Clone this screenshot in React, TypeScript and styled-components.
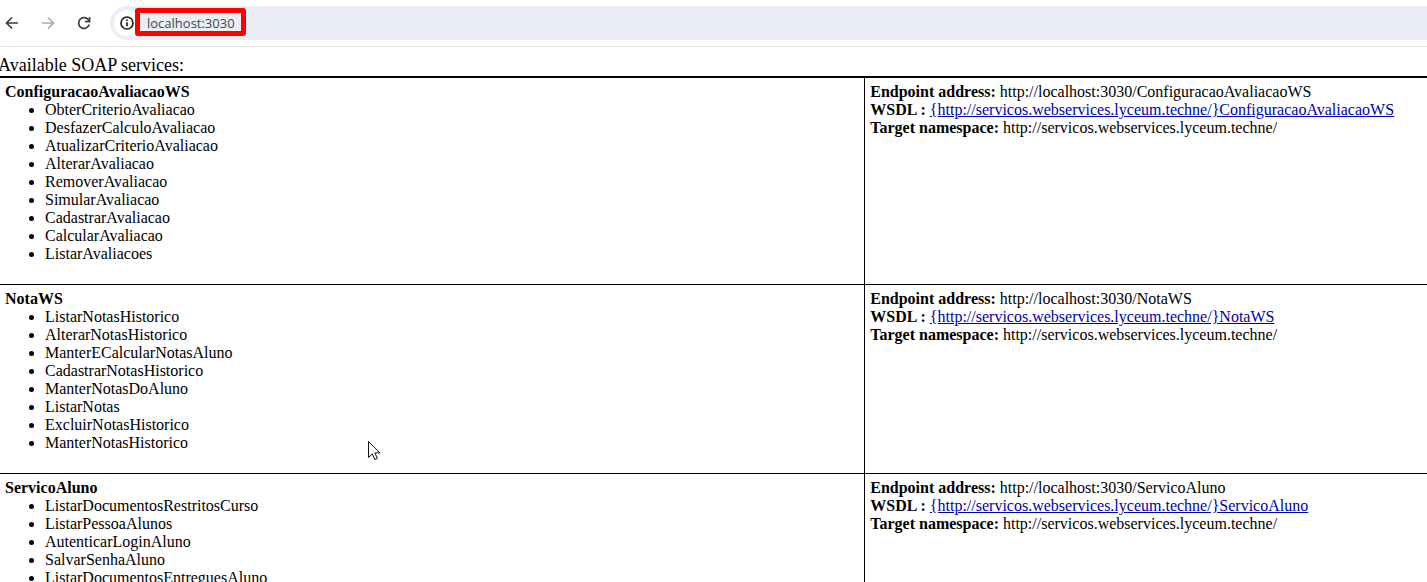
import React from "react";
import styled, { createGlobalStyle } from "styled-components";

const GlobalStyle = createGlobalStyle`
  html, body { margin: 0; padding: 0; background: #fff; }
  body { font-family: "Liberation Serif", "Times New Roman", serif; color: #000; }
`;

const Screen = styled.div`
  position: relative;
  display: flex;
  flex-direction: column;
  height: 100vh;
  overflow: hidden;
`;

const Toolbar = styled.header`
  display: flex;
  flex: none;
  align-items: center;
  padding-top: 6px;
  padding-bottom: 6px;
  border-bottom: 1px solid #dfe1e0;
`;

const NavButton = styled.button<{ $muted?: boolean }>`
  display: flex;
  flex: none;
  align-items: center;
  justify-content: center;
  width: 36px;
  height: 34px;
  padding: 0;
  border: 0;
  background: none;
  color: ${(p) => (p.$muted ? "#a9aaac" : "#3c3d40")};

  &:first-child {
    width: 30px;
    padding-right: 6px;
  }
`;

const AddressBar = styled.div`
  display: flex;
  flex: 1;
  align-items: center;
  height: 34px;
  margin-left: 8px;
  border-radius: 17px 0 0 17px;
  background: #ebeef7;
`;

const SiteInfo = styled.button`
  display: flex;
  flex: none;
  align-items: center;
  justify-content: center;
  width: 26px;
  height: 26px;
  margin-left: 4px;
  padding: 0;
  border: 0;
  border-radius: 13px;
  background: #fff;
  color: #202124;
`;

const Highlight = styled.div`
  box-sizing: border-box;
  display: flex;
  align-items: center;
  position: relative;
  width: 111px;
  height: 28px;
  margin-left: -5px;
  margin-bottom: 2px;
  border: 5px solid #fe0000;
  border-radius: 3px;
`;

const UrlInput = styled.input`
  width: 100%;
  min-width: 0;
  height: 18px;
  padding: 2px 0 0 7px;
  border: 0;
  outline: 0;
  background: transparent;
  color: #45474b;
  font: 13px/16px "Open Sans", sans-serif;
`;

const Page = styled.main`
  flex: 1;
  min-height: 0;
  overflow: hidden;
`;

const Heading = styled.h1`
  margin: 0 0 0 -2px;
  padding: 8px 0 0;
  font-size: 18px;
  line-height: 21px;
  font-weight: 400;
`;

const Services = styled.table`
  width: 100%;
  table-layout: fixed;
  border-collapse: collapse;
  border-top: 2px solid #000;
  font-size: 16px;
  line-height: 18px;
`;

const OperationsColumn = styled.col`
  width: 60.6%;
`;

const Cell = styled.td`
  padding: 5px;
  border-bottom: 1px solid #000;
  vertical-align: top;

  & + & {
    border-left: 1px solid #000;
  }
`;

const Label = styled.span`
  font-weight: 700;
`;

const Operations = styled.ul`
  margin: 0 0 16px;
  padding-left: 40px;
`;

const Detail = styled.div`
  white-space: nowrap;
`;

const WsdlLink = styled.a`
  color: #0000b4;
`;

const Cursor = styled.svg`
  position: absolute;
  left: 367px;
  top: 440px;
`;

const NAMESPACE = "http://servicos.webservices.lyceum.techne/";

const services = [
  {
    name: "ConfiguracaoAvaliacaoWS",
    operations: [
      "ObterCriterioAvaliacao",
      "DesfazerCalculoAvaliacao",
      "AtualizarCriterioAvaliacao",
      "AlterarAvaliacao",
      "RemoverAvaliacao",
      "SimularAvaliacao",
      "CadastrarAvaliacao",
      "CalcularAvaliacao",
      "ListarAvaliacoes",
    ],
  },
  {
    name: "NotaWS",
    operations: [
      "ListarNotasHistorico",
      "AlterarNotasHistorico",
      "ManterECalcularNotasAluno",
      "CadastrarNotasHistorico",
      "ManterNotasDoAluno",
      "ListarNotas",
      "ExcluirNotasHistorico",
      "ManterNotasHistorico",
    ],
  },
  {
    name: "ServicoAluno",
    operations: [
      "ListarDocumentosRestritosCurso",
      "ListarPessoaAlunos",
      "AutenticarLoginAluno",
      "SalvarSenhaAluno",
      "ListarDocumentosEntreguesAluno",
    ],
  },
];

const stroke = { fill: "none", stroke: "currentColor", strokeWidth: 1.7 };

export default function App() {
  return (
    <Screen>
      <GlobalStyle />
      <Toolbar>
        <NavButton type="button" aria-label="Back">
          <svg width="14" height="14" viewBox="0 0 14 14" {...stroke}>
            <path d="M13 7H2M7 1.5 1.5 7 7 12.5" />
          </svg>
        </NavButton>
        <NavButton type="button" aria-label="Forward" $muted>
          <svg width="14" height="14" viewBox="0 0 14 14" {...stroke}>
            <path d="M1 7h11M7 1.5 12.5 7 7 12.5" />
          </svg>
        </NavButton>
        <NavButton type="button" aria-label="Reload">
          <svg width="14" height="14" viewBox="0 0 14 14" {...stroke}>
            <path d="M12.2 8.5A5.4 5.4 0 1 1 11.5 4L12.3 5.2" />
            <path d="M12.6 1v4.6H8" />
          </svg>
        </NavButton>
        <AddressBar>
          <SiteInfo type="button" aria-label="Site information">
            <svg width="14" height="14" viewBox="0 0 14 14" {...stroke}>
              <circle cx="7" cy="7" r="6" />
              <path d="M7 6.2v4M7 3.5v1.6" />
            </svg>
          </SiteInfo>
          <Highlight>
            <UrlInput aria-label="Address" defaultValue="localhost:3030" />
          </Highlight>
        </AddressBar>
      </Toolbar>
      <Page>
        <Heading>Available SOAP services:</Heading>
        <Services>
          <colgroup>
            <OperationsColumn />
            <col />
          </colgroup>
          <tbody>
            {services.map((service) => (
              <tr key={service.name}>
                <Cell>
                  <Label>{service.name}</Label>
                  <Operations>
                    {service.operations.map((operation) => (
                      <li key={operation}>{operation}</li>
                    ))}
                  </Operations>
                </Cell>
                <Cell>
                  <Detail>
                    <Label>Endpoint address:</Label> http://localhost:3030/{service.name}
                  </Detail>
                  <Detail>
                    <Label>WSDL :</Label>{" "}
                    <WsdlLink href={`/${service.name}?wsdl`}>
                      {`{${NAMESPACE}}${service.name}`}
                    </WsdlLink>
                  </Detail>
                  <Detail>
                    <Label>Target namespace:</Label> {NAMESPACE}
                  </Detail>
                </Cell>
              </tr>
            ))}
          </tbody>
        </Services>
      </Page>
      <Cursor width="14" height="21" viewBox="0 0 14 21" aria-hidden="true">
        <path
          d="M1.5 1.5v16l3.8-3.6 2.5 5.6 2.6-1.1-2.5-5.5h5.1z"
          fill="#fff"
          stroke="#111"
        />
      </Cursor>
    </Screen>
  );
}
